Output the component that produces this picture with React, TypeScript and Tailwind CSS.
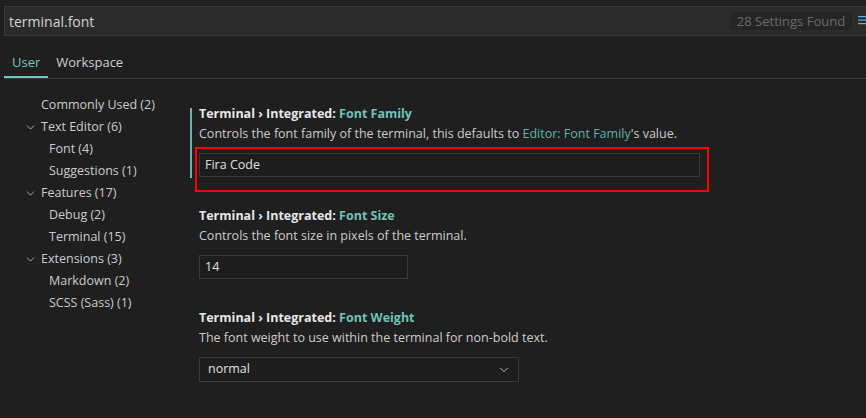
import { ChevronDown } from "lucide-react";

const tree = [
  { label: "Commonly Used (2)", level: 0, chevron: false },
  { label: "Text Editor (6)", level: 0, chevron: true },
  { label: "Font (4)", level: 1, chevron: false },
  { label: "Suggestions (1)", level: 1, chevron: false },
  { label: "Features (17)", level: 0, chevron: true },
  { label: "Debug (2)", level: 1, chevron: false },
  { label: "Terminal (15)", level: 1, chevron: false },
  { label: "Extensions (3)", level: 0, chevron: true },
  { label: "Markdown (2)", level: 1, chevron: false },
  { label: "SCSS (Sass) (1)", level: 1, chevron: false },
];

function Title({ name }: { name: string }) {
  return (
    <div className="h-[20px] leading-[20px] font-bold text-[#e7e7e7]">
      Terminal › Integrated: <span className="text-[#6fc3b8]">{name}</span>
    </div>
  );
}

export default function App() {
  return (
    <div
      className="w-[866px] h-[418px] overflow-hidden bg-[#1f1f1f] text-[12.5px] text-[#cccccc]"
      style={{ fontFamily: '"Open Sans", "Noto Sans", sans-serif' }}
    >
      {/* search */}
      <div className="pt-[6px] pl-[4px]">
        <div className="flex items-center h-[30px] border border-[#3a3a3a] border-r-0 bg-[#2b2b2b] pl-[4px] overflow-hidden">
          <span className="flex-1 text-[14px] text-[#d4d4d4]">terminal.font</span>
          <span className="h-[18px] leading-[18px] w-[122px] shrink-0 text-center bg-[#252525] text-[#6b6b6b] text-[13px] mr-[6px] rounded-sm">
            28 Settings Found
          </span>
          <svg width="8" height="12" viewBox="0 0 8 12" className="shrink-0">
            <rect x="0" y="1" width="8" height="1.2" fill="#55b6e8" />
            <rect x="0" y="4.5" width="8" height="1.2" fill="#55b6e8" />
            <rect x="0" y="8" width="8" height="1.2" fill="#55b6e8" />
          </svg>
        </div>
      </div>

      {/* tabs */}
      <div className="flex mt-[14px] ml-[4px] border-b border-[#3a3a3a] h-[29px]">
        <div className="px-[8px] h-[28px] leading-[24px] text-[13px] text-[#73c7bd] border-b-2 border-[#73c7bd]">User</div>
        <div className="px-[8px] h-[28px] leading-[24px] text-[13px] text-[#d0d0d0]">Workspace</div>
      </div>

      <div className="flex mt-[14px]">
        {/* tree */}
        <div className="w-[190px] shrink-0 pt-[1px]">
          {tree.map((t) => (
            <div key={t.label} className="flex items-center h-[22px]" style={{ paddingLeft: t.level ? 49 : 24 }}>
              {t.level === 0 && (
                <span className="w-[17px] flex items-center">
                  {t.chevron && <ChevronDown size={13} strokeWidth={1.5} className="text-[#c5c5c5]" />}
                </span>
              )}
              <span>{t.label}</span>
            </div>
          ))}
        </div>

        {/* settings */}
        <div className="flex-1 flex flex-col gap-[29px] pt-[11px]">
          <div className="relative pl-[9px]">
            <div className="absolute left-0 top-[4px] h-[70px] w-[2px] bg-[#73b3ad]" />
            <Title name="Font Family" />
            <div className="h-[20px] leading-[20px]">
              Controls the font family of the terminal, this defaults to{" "}
              <span className="text-[#5fb3a8]">Editor: Font Family</span>'s value.
            </div>
            <div className="mt-[9px] w-[501px] h-[24px] border border-[#3a3a3a] bg-[#1d1d1d] pl-[5px] leading-[22px] text-[#e0e0e0]">
              Fira Code
            </div>
            <div className="absolute left-[5px] top-[43px] w-[514px] h-[45px] border-2 border-[#ff0000]" />
          </div>

          <div className="pl-[9px]">
            <Title name="Font Size" />
            <div className="h-[20px] leading-[20px]">Controls the font size in pixels of the terminal.</div>
            <div className="mt-[9px] w-[209px] h-[24px] border border-[#3a3a3a] bg-[#1d1d1d] pl-[5px] leading-[22px] text-[#e0e0e0]">
              14
            </div>
          </div>

          <div className="pl-[9px]">
            <Title name="Font Weight" />
            <div className="h-[20px] leading-[20px]">The font weight to use within the terminal for non-bold text.</div>
            <div className="mt-[9px] w-[320px] h-[25px] border border-[#3a3a3a] bg-[#1d1d1d] pl-[8px] pr-[7px] flex items-center justify-between text-[#e0e0e0]">
              <span>normal</span>
              <ChevronDown size={14} strokeWidth={1.5} className="text-[#c5c5c5]" />
            </div>
          </div>

          <div className="pl-[9px] mt-[3px]">
            <Title name="Font Weight Bold" />
          </div>
        </div>
      </div>
    </div>
  );
}
